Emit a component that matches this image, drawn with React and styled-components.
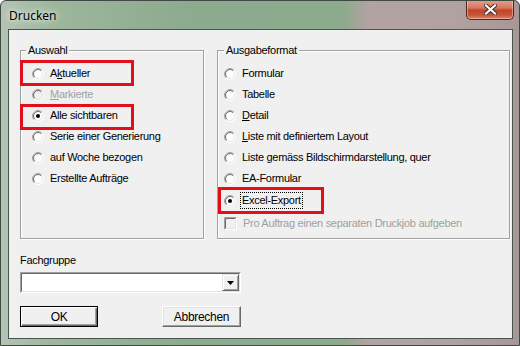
import React from "react";
import styled, { createGlobalStyle } from "styled-components";

const Global = createGlobalStyle`
  html, body { margin: 0; padding: 0; background: #ffffff; }
  body { font-family: "Liberation Sans", Arial, sans-serif; font-size: 11px; letter-spacing: -0.3px; }
`;

const Window = styled.div`
  width: 520px;
  height: 346px;
  box-sizing: border-box;
  border: 1px solid #3e4a42;
  border-radius: 6px 6px 0 0;
  background: linear-gradient(90deg, #b4c3b3 0%, #9db79d 10%, #8dab8e 35%, #8caa8c 66%, #b3a2a2 71%, #b2a1a1 88%, #a99696 100%);
  display: flex;
  flex-direction: column;
  position: relative;
  overflow: hidden;
`;

const TitleBar = styled.div`
  height: 28px;
  flex: none;
  display: flex;
  align-items: center;
  padding-left: 8px;
  font-family: "Noto Sans", "Open Sans", sans-serif;
  font-size: 12px;
  letter-spacing: 0;
  color: #000;
  text-shadow: 0 0 8px rgba(255,255,255,0.9), 0 0 4px rgba(255,255,255,0.8);
`;

const CloseButton = styled.div`
  position: absolute;
  top: -1px;
  right: 5px;
  width: 48px;
  height: 20px;
  box-sizing: border-box;
  border: 1px solid #4c2a24;
  border-top: none;
  border-radius: 0 0 5px 5px;
  background: linear-gradient(180deg, #e4a08e 0%, #d77a62 40%, #c2452a 55%, #c9563a 80%, #dc8a70 100%);
  box-shadow: inset 0 0 0 1px rgba(255,220,210,0.45);
  display: flex;
  align-items: center;
  justify-content: center;
`;

const Client = styled.div`
  flex: 1;
  margin: 0 6px 6px 7px;
  background: #f0f0f0;
  border: 1px solid #4a5550;
  display: flex;
  flex-direction: column;
  padding: 20px 0 0 11px;
  color: #000;
`;

const GroupRow = styled.div`
  display: grid;
  grid-template-columns: 184px 293px;
  column-gap: 13px;
  height: 189px;
`;

const GroupBox = styled.div`
  position: relative;
  border: 1px solid #a0a0a0;
  box-shadow: inset 1px 1px 0 #ffffff, 1px 1px 0 #ffffff;
  padding: ${(p) => p.$pad};
  display: flex;
  flex-direction: column;
`;

const Legend = styled.span`
  position: absolute;
  top: -7px;
  left: ${(p) => p.$left}px;
  padding: 0 2px 0 2px;
  background: #f0f0f0;
  line-height: 13px;
`;

const Row = styled.div`
  position: relative;
  display: flex;
  align-items: center;
  height: 21px;
  gap: 6px;
  margin-top: ${(p) => p.$mt || 0}px;
  color: ${(p) => (p.$disabled ? "#a0a0a0" : "#000")};
`;

const Label = styled.span`
  white-space: nowrap;
  line-height: 13px;
  ${(p) => p.$focus && `outline: 1px dotted #000; outline-offset: 1px;`}
`;

const Highlight = styled.div`
  position: absolute;
  left: ${(p) => p.$left}px;
  top: ${(p) => p.$top}px;
  width: ${(p) => p.$width}px;
  height: ${(p) => p.$height}px;
  box-sizing: border-box;
  border: 3px solid #e20f1b;
  pointer-events: none;
`;

const FieldLabel = styled.div`
  margin-top: 14px;
  height: 14px;
  line-height: 14px;
`;

const Combo = styled.div`
  margin-top: 5px;
  width: 221px;
  height: 21px;
  box-sizing: border-box;
  border-top: 1px solid #a0a0a0;
  border-left: 1px solid #a0a0a0;
  border-right: 1px solid #ffffff;
  border-bottom: 1px solid #ffffff;
  display: flex;
`;

const ComboInner = styled.div`
  flex: 1;
  border-top: 1px solid #696969;
  border-left: 1px solid #696969;
  border-right: 1px solid #e3e3e3;
  border-bottom: 1px solid #e3e3e3;
  background: #ffffff;
  display: flex;
  justify-content: flex-end;
`;

const ComboButton = styled.div`
  width: 17px;
  box-sizing: border-box;
  background: #f0f0f0;
  border-top: 1px solid #e3e3e3;
  border-left: 1px solid #e3e3e3;
  border-right: 1px solid #696969;
  border-bottom: 1px solid #696969;
  box-shadow: inset 1px 1px 0 #ffffff, inset -1px -1px 0 #a0a0a0;
  display: flex;
  align-items: center;
  justify-content: center;
`;

const ButtonRow = styled.div`
  margin-top: 13px;
  display: flex;
  gap: 64px;
`;

const Button = styled.div`
  width: ${(p) => p.$w}px;
  height: 21px;
  box-sizing: border-box;
  background: #f0f0f0;
  display: flex;
  align-items: center;
  justify-content: center;
  border: 1px solid ${(p) => (p.$default ? "#000" : "#f0f0f0")};
  box-shadow: ${(p) =>
    p.$default
      ? "inset 1px 1px 0 #ffffff, inset -1px -1px 0 #696969, inset -2px -2px 0 #a0a0a0"
      : "inset 0 0 0 0 transparent"};
  ${(p) =>
    !p.$default &&
    `border-top-color:#ffffff;border-left-color:#ffffff;border-right-color:#696969;border-bottom-color:#696969;box-shadow: inset -1px -1px 0 #a0a0a0, inset 1px 1px 0 #e3e3e3;`}
  font-size: 12px;
`;

const U = styled.span`
  text-decoration: underline;
`;

function Radio({ checked, disabled }) {
  const c = 6;
  const o = 5.5;
  const i = 4.5;
  const k = 0.7071;
  const arc = (r, a) => {
    const x1 = c - r * k, y1 = c + r * k, x2 = c + r * k, y2 = c - r * k;
    return a
      ? `M${x1} ${y1} A${r} ${r} 0 0 1 ${x2} ${y2}`
      : `M${x2} ${y2} A${r} ${r} 0 0 1 ${x1} ${y1}`;
  };
  return (
    <svg width="12" height="12" viewBox="0 0 12 12" style={{ flex: "none" }}>
      <circle cx="6" cy="6" r="5.5" fill={disabled ? "#f0f0f0" : "#ffffff"} />
      <path d={arc(o, true)} stroke="#a0a0a0" strokeWidth="1" fill="none" />
      <path d={arc(o, false)} stroke="#ffffff" strokeWidth="1" fill="none" />
      <path d={arc(i, true)} stroke="#696969" strokeWidth="1" fill="none" />
      <path d={arc(i, false)} stroke="#e3e3e3" strokeWidth="1" fill="none" />
      {checked && <circle cx="6" cy="6" r="2" fill="#000" />}
    </svg>
  );
}

function Check() {
  return (
    <svg width="13" height="13" viewBox="0 0 13 13" style={{ flex: "none" }}>
      <rect x="0" y="0" width="13" height="13" fill="#ffffff" />
      <rect x="1" y="1" width="11" height="11" fill="#f0f0f0" />
      <path d="M0.5 12.5 V0.5 H12.5" stroke="#a0a0a0" fill="none" />
      <path d="M1.5 11.5 V1.5 H11.5" stroke="#696969" fill="none" />
      <path d="M1.5 11.5 H11.5 V1.5" stroke="#e3e3e3" fill="none" />
    </svg>
  );
}

export default function App() {
  return (
    <>
      <Global />
      <Window>
        <TitleBar>Drucken</TitleBar>
        <CloseButton>
          <svg width="13" height="11" viewBox="0 0 13 11">
            <path d="M2 1.5 L11 9.5 M11 1.5 L2 9.5" stroke="#3a2a28" strokeWidth="4" strokeLinecap="square" />
            <path d="M2 1.5 L11 9.5 M11 1.5 L2 9.5" stroke="#ffffff" strokeWidth="2.2" strokeLinecap="square" />
          </svg>
        </CloseButton>
        <Client>
          <GroupRow>
            <GroupBox $pad="12px 0 0 11px">
              <Legend $left={5}>Auswahl</Legend>
              <Row>
                <Highlight $left={-12} $top={-3} $width={114} $height={26} />
                <Radio />
                <Label>A<U>k</U>tueller</Label>
              </Row>
              <Row $disabled>
                <Radio disabled />
                <Label><U>M</U>arkierte</Label>
              </Row>
              <Row>
                <Highlight $left={-12} $top={-1} $width={114} $height={26} />
                <Radio checked />
                <Label>Alle sichtbaren</Label>
              </Row>
              <Row>
                <Radio />
                <Label>Serie einer Generierung</Label>
              </Row>
              <Row>
                <Radio />
                <Label>auf Woche bezogen</Label>
              </Row>
              <Row>
                <Radio />
                <Label>Erstellte Aufträge</Label>
              </Row>
            </GroupBox>
            <GroupBox $pad="12px 0 0 6px">
              <Legend $left={6}>Ausgabeformat</Legend>
              <Row>
                <Radio />
                <Label>Formular</Label>
              </Row>
              <Row>
                <Radio />
                <Label>Tabelle</Label>
              </Row>
              <Row>
                <Radio />
                <Label><U>D</U>etail</Label>
              </Row>
              <Row>
                <Radio />
                <Label><U>L</U>iste mit definiertem Layout</Label>
              </Row>
              <Row>
                <Radio />
                <Label>Liste gemäss Bildschirmdarstellung, quer</Label>
              </Row>
              <Row>
                <Radio />
                <Label>EA-Formular</Label>
              </Row>
              <Row $mt={1}>
                <Highlight $left={-6} $top={-3} $width={106} $height={27} />
                <Radio checked />
                <Label $focus>Excel-Export</Label>
              </Row>
              <Row $mt={2} $disabled>
                <Check />
                <Label>Pro Auftrag einen separaten Druckjob aufgeben</Label>
              </Row>
            </GroupBox>
          </GroupRow>
          <FieldLabel>Fachgruppe</FieldLabel>
          <Combo>
            <ComboInner>
              <ComboButton>
                <svg width="7" height="4" viewBox="0 0 7 4">
                  <path d="M0 0 H7 L3.5 4 Z" fill="#000" />
                </svg>
              </ComboButton>
            </ComboInner>
          </Combo>
          <ButtonRow>
            <Button $w={78} $default>OK</Button>
            <Button $w={79}>Abbrechen</Button>
          </ButtonRow>
        </Client>
      </Window>
    </>
  );
}
